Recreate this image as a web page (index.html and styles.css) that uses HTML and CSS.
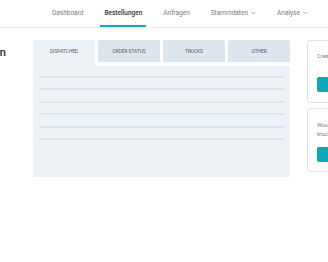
FILE: index.html
```html
<!doctype html>
<html lang="de">
  <head>
    <meta charset="UTF-8" />
    <meta name="viewport" content="width=device-width, initial-scale=1.0" />
    <title>Bestellungen</title>
    <link rel="stylesheet" href="styles.css">
  </head>
  <body>
    <!-- Top navigation -->
    <div class="nav">
      <div class="nav-item">Dashboard</div>
      <div class="nav-item active">Bestellungen</div>
      <div class="nav-item">Anfragen</div>
      <div class="nav-item">
        Stammdaten
        <svg class="chev" viewBox="0 0 8 5" width="5" height="4"><path d="M1 1l3 3 3-3" fill="none" stroke="#888" stroke-width="1.2"/></svg>
      </div>
      <div class="nav-item">
        Analyse
        <svg class="chev" viewBox="0 0 8 5" width="5" height="4"><path d="M1 1l3 3 3-3" fill="none" stroke="#888" stroke-width="1.2"/></svg>
      </div>
    </div>

    <div class="main">
      <!-- Page title, cut off on the left -->
      <div class="title-col">
        <h1 class="title">Bestellungen</h1>
      </div>

      <!-- Tabs + loading list -->
      <div class="orders">
        <div class="tabs">
          <div class="tab active">DISPATCHED</div>
          <div class="tab">ORDER STATUS</div>
          <div class="tab">TRUCKS</div>
          <div class="tab">OTHER</div>
        </div>
        <div class="panel">
          <div class="line"></div>
          <div class="line"></div>
          <div class="line"></div>
          <div class="line"></div>
          <div class="line"></div>
          <div class="line"></div>
        </div>
      </div>

      <!-- Side cards -->
      <div class="side">
        <div class="card">
          <p class="card-text">Create a new order</p>
          <div class="card-btn first"></div>
        </div>
        <div class="card second">
          <p class="card-text">Would you like to add<br />trucks?</p>
          <div class="card-btn"></div>
        </div>
      </div>
    </div>
  </body>
</html>
```

FILE: styles.css
```css
* {
  margin: 0;
  padding: 0;
  box-sizing: border-box;
}

body {
  font-family: Roboto, "Liberation Sans", sans-serif;
  background: #fff;
  overflow: hidden;
  width: 328px;
  height: 262px;
}

.nav {
  display: flex;
  height: 28px;
  padding-left: 48px;
  gap: 13px;
  border-bottom: 1px solid #ececec;
}

.nav-item {
  display: flex;
  align-items: center;
  gap: 3px;
  padding: 0 4px;
  height: 27px;
  padding-top: 1px;
  border-bottom: 2px solid transparent;
  font-size: 6.5px;
  color: #7a7a7a;
  white-space: nowrap;
}

.nav-item.active {
  color: #333;
  font-weight: 500;
  border-bottom-color: #1aa9b8;
}

.main {
  display: flex;
  align-items: flex-start;
  padding-top: 12px;
}

.title-col {
  width: 6px;
  flex-shrink: 0;
  display: flex;
  justify-content: flex-end;
  overflow: hidden;
  margin-right: 27px;
  margin-top: 6px;
}

.title {
  font-size: 11px;
  font-weight: 500;
  color: #222;
  white-space: nowrap;
}

.orders {
  width: 257px;
  flex-shrink: 0;
}

.tabs {
  display: grid;
  grid-template-columns: repeat(4, 1fr);
  gap: 3px;
  align-items: start;
}

.tab {
  height: 22px;
  display: flex;
  align-items: center;
  justify-content: center;
  background: #dde5ee;
  font-size: 4.8px;
  color: #556;
  border-radius: 2px 2px 0 0;
}

.tab.active {
  height: 26px;
  padding-bottom: 4px;
  background: #edf2f7;
}

.panel {
  height: 111px;
  background: #edf2f7;
  padding: 10px 6px 0;
  display: flex;
  flex-direction: column;
  gap: 10.4px;
  border-radius: 0 0 2px 2px;
}

.line {
  height: 2px;
  background: #dce4ed;
}

.side {
  width: 90px;
  flex-shrink: 0;
  margin-left: 17px;
  display: flex;
  flex-direction: column;
  gap: 5px;
}

.card {
  border: 1px solid #e2e2e2;
  border-radius: 3px;
  padding: 10px 9px 10px;
  background: #fff;
}

.card.second {
  padding: 11px 9px 9px;
}

.card-text {
  font-size: 6px;
  line-height: 9px;
  color: #777;
  white-space: nowrap;
}

.card-btn {
  height: 15px;
  background: #12a7b7;
  border-radius: 2px;
  margin-top: 9px;
}

.card-btn.first {
  margin-top: 17px;
}
```
